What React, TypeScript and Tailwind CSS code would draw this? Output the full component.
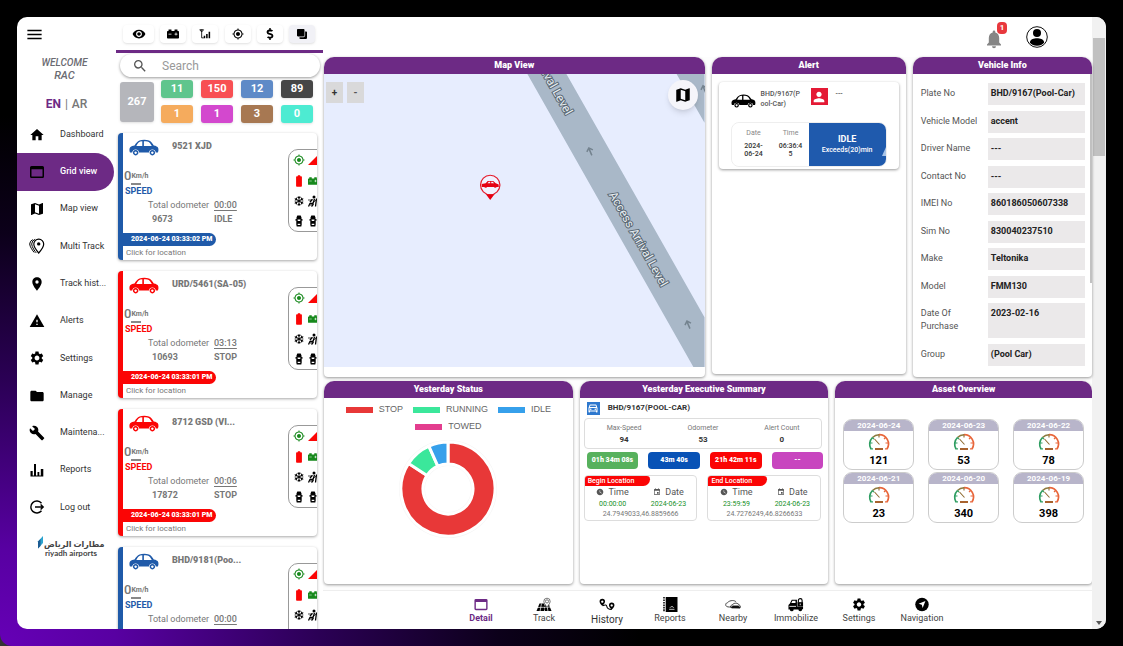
import React from "react";
import {
  MdRemoveRedEye, MdMyLocation, MdHome, MdMap, MdLocationOn, MdWarning, MdSettings,
  MdFolder, MdBuild, MdSearch, MdMenu, MdSignalCellular4Bar, MdBatteryFull,
  MdPerson, MdEvent, MdWatchLater, MdOutlineDirectionsCar,
} from "react-icons/md";
import { FaCarBattery, FaDollarSign, FaClone, FaRegSnowflake } from "react-icons/fa";

type P = { className?: string };

const Sedan = ({ className }: P) => (
  <svg viewBox="0 0 30 17" className={className} fill="currentColor" aria-hidden="true">
    <path fillRule="evenodd" d="M1 13.5C.2 12 .2 9.500 1.200 8.300C2.500 7 4 6.800 5.500 6.400C7 4 8.500 2.200 10.500 1.400C13 .5 17.500 .5 20 1.400C22 2.200 23.500 4.500 24.800 6.400C27 6.800 28.700 7.500 29.200 9C29.600 10.500 29.600 12.500 28.800 13.500H26.800A3.500 3.500 0 0 0 19.900 13.500H10.100A3.500 3.500 0 0 0 3.200 13.500ZM7.300 7H13.300V2.200C10 2.200 8.800 4 7.300 7ZM14.900 7H22.800C21.700 4.600 20.300 2.700 18.400 2.400C17.200 2.200 16.200 2.200 14.900 2.200Z" />
    <path fillRule="evenodd" d="M6.650 11a2.700 2.700 0 1 0 .01 0zM6.650 12.500a1.200 1.200 0 1 1-.01 0zM23.350 11a2.700 2.700 0 1 0 .01 0zM23.350 12.500a1.200 1.200 0 1 1-.01 0z" />
  </svg>
);

const WindowIcon = ({ className }: P) => (
  <svg viewBox="0 0 16 16" className={className} fill="currentColor" aria-hidden="true">
    <path fillRule="evenodd" d="M2.500 2H13.500A1.500 1.500 0 0 1 15 3.500V12.500A1.500 1.500 0 0 1 13.500 14H2.500A1.500 1.500 0 0 1 1 12.500V3.500A1.500 1.500 0 0 1 2.500 2ZM2.500 5.200V12.500H13.500V5.200Z" />
  </svg>
);

const Bell = ({ className }: P) => (
  <svg viewBox="0 0 16 20" className={className} fill="currentColor" aria-hidden="true">
    <path d="M8 1.500A1.300 1.300 0 0 0 6.700 2.800V3.500C4 4.200 2.800 6.500 2.800 9V13.500L1 15.500V16.500H15V15.500L13.200 13.500V9C13.200 6.500 12 4.200 9.300 3.500V2.800A1.300 1.300 0 0 0 8 1.500ZM6 17.300A2 2 0 0 0 10 17.300Z" />
  </svg>
);

const Antenna = ({ className }: P) => (
  <svg viewBox="0 0 14 12" className={className} aria-hidden="true">
    <path d="M.8 1H5.400M3.100 1V10.500H5.500M1 1.200L3.100 3.600L5.200 1.200" fill="none" stroke="currentColor" strokeWidth="1" />
    <path d="M5.500 8H7.300V11H5.500zM8.300 6H10.100V11H8.300zM11.200 3.500H13V11H11.200z" fill="currentColor" />
  </svg>
);

const MultiPin = ({ className }: P) => (
  <svg viewBox="0 0 16 16" className={className} fill="none" stroke="currentColor" strokeWidth="1.200" aria-hidden="true">
    <path d="M9.700 1.200A4.900 4.900 0 0 0 4.800 6.100C4.800 9.500 9.700 15 9.700 15S14.700 9.500 14.700 6.100A4.900 4.900 0 0 0 9.700 1.200Z" />
    <circle cx="9.700" cy="5.900" r="1.700" fill="currentColor" stroke="none" />
    <path d="M6.200 1.300A5 5 0 0 0 2.700 6C2.700 9 6.300 13.800 7.200 14.900M3.800 1.600A5 5 0 0 0 .7 6C.7 8.700 4 13 5.200 14.500" strokeWidth="1" />
  </svg>
);

const Bars = ({ className }: P) => (
  <svg viewBox="0 0 16 16" className={className} fill="currentColor" aria-hidden="true">
    <path d="M1.500 9H3.700V14H1.500zM5 2H7V14H5zM8.500 10H10.300V14H8.500zM11.800 7H14.300V14H11.800zM1.500 13.500H14.300V14.500H1.500z" />
  </svg>
);

const LogOut = ({ className }: P) => (
  <svg viewBox="0 0 16 16" className={className} fill="none" stroke="currentColor" strokeWidth="1.400" aria-hidden="true">
    <path d="M12.500 4.200A6 6 0 1 0 12.500 11.800M6 8H14M11.600 5.500L14.200 8L11.600 10.500" />
  </svg>
);

const TopCar = ({ className }: P) => (
  <svg viewBox="0 0 8 12" className={className} fill="currentColor" aria-hidden="true">
    <path fillRule="evenodd" d="M2.300 .5H5.700L6.500 2.500V4L7.700 4.500V5.500H6.700V9.500L6.300 11.500H1.700L1.300 9.500V5.500H.3V4.500L1.500 4V2.500ZM2.500 4.500L2.800 6H5.200L5.500 4.500ZM2.700 8.800V10H5.300V8.800Z" />
  </svg>
);

const SeatBelt = ({ className }: P) => (
  <svg viewBox="0 0 12 12" className={className} fill="none" stroke="currentColor" aria-hidden="true">
    <circle cx="7" cy="2" r="1.500" fill="currentColor" stroke="none" />
    <path d="M7.500 4L6 8.500H3L1.500 11.500M5.500 4.200L3 7M9.500 3.500L8.500 11.500M4.500 11.500L6.500 9" strokeWidth="1.300" />
    <path d="M9 5L3 10.500M1 5L5 5" strokeWidth=".7" />
  </svg>
);

const Avatar = ({ className }: P) => (
  <svg viewBox="0 0 22 22" className={className} aria-hidden="true">
    <circle cx="11" cy="11" r="10.300" fill="none" stroke="#111" strokeWidth="1" />
    <circle cx="11" cy="7" r="4" />
    <path d="M3.800 16.500C4.500 13 8 12.300 11 12.300S17.500 13 18.200 16.500C16.500 18.700 14 19.800 11 19.800S5.500 18.700 3.800 16.500Z" />
  </svg>
);

const TrackIcon = ({ className }: P) => (
  <svg viewBox="0 0 16 14" className={className} aria-hidden="true">
    <path d="M3.500 6H12.500L15.500 13.500H.5Z" />
    <path d="M1 10L15 9.500M5.500 6L4 14M8.500 6V8M8.500 9.500V11M8.500 12V14M11 8L12 14" stroke="#fff" strokeWidth=".7" fill="none" />
    <path d="M11 .7A3.200 3.200 0 0 0 7.800 4C7.800 6 11 9.500 11 9.500S14.200 6 14.200 4A3.200 3.200 0 0 0 11 .7Z" fill="#fff" stroke="#555" strokeWidth=".8" />
    <circle cx="11" cy="3.900" r="1.600" fill="none" stroke="#555" strokeWidth=".8" />
  </svg>
);

const HistoryIcon = ({ className }: P) => (
  <svg viewBox="0 0 17 12" className={className} aria-hidden="true">
    <path fillRule="evenodd" d="M3.500 0A2.900 2.900 0 0 0 .6 2.900C.6 4.800 3.500 7.600 3.500 7.600S6.400 4.800 6.400 2.900A2.900 2.900 0 0 0 3.500 0ZM3.500 1.700a1.200 1.200 0 1 1-.01 0zM13.500 4A2.900 2.900 0 0 0 10.600 6.900C10.600 8.800 13.500 11.600 13.500 11.600S16.400 8.800 16.400 6.900A2.900 2.900 0 0 0 13.500 4ZM13.500 5.700a1.200 1.200 0 1 1-.01 0z" />
    <path d="M3.800 7.300C7 6 8 6.300 8.300 8S9.500 11.300 13.500 11.200" fill="none" stroke="#000" strokeWidth="1.100" />
  </svg>
);

const BookIcon = ({ className }: P) => (
  <svg viewBox="0 0 14 14" className={className} aria-hidden="true">
    <path d="M3 0H14V14H3z" />
    <path d="M1.400 0V14" stroke="#000" strokeWidth="1.400" strokeDasharray="1.500 .8" />
    <path d="M6.200 11.500H11.200M7 10A2 2 0 0 1 10.500 10" stroke="#fff" strokeWidth=".7" fill="none" />
  </svg>
);

const NearbyIcon = ({ className }: P) => (
  <svg viewBox="0 0 17 10" className={className} fill="none" stroke="#111" strokeWidth=".8" aria-hidden="true">
    <path d="M7 7.500C4 8 1.500 7.500 1 6.300C.4 4.500 1 3.500 2.500 3.200C4 1.500 6 .8 8 .8C9.500 .8 10.700 1.200 11.800 2.200" />
    <path d="M6 8C5.500 6.500 6.500 5.800 7.500 5.600C9 4 10 3.600 11.500 3.600S14.500 4.300 15.200 5.700C16.500 6 16.700 7.500 16 8.500Z" />
    <path d="M8 6.500H14.500L16 8.700H7Z" fill="#111" />
  </svg>
);

const ImmobilizeIcon = ({ className }: P) => (
  <svg viewBox="0 0 17 14" className={className} aria-hidden="true">
    <path fillRule="evenodd" d="M2 6L4 2H9.500V9H16V12H15A2 2 0 0 1 11 12.300H6A2 2 0 0 1 2 12.300H.5V7.500ZM3.500 5.500H8V3H4.700Z" />
    <path d="M10 4.500H16V9H10z" />
    <path d="M11 5V2.700A2 2 0 0 1 15 2.700V5" fill="none" stroke="#000" strokeWidth="1.200" />
    <path d="M13 6V7.700M1.500 9H8.500" stroke="#fff" strokeWidth=".9" />
  </svg>
);

const NavIcon = ({ className }: P) => (
  <svg viewBox="0 0 14 14" className={className} aria-hidden="true">
    <circle cx="7" cy="7" r="6.300" />
    <path d="M10.200 3.800L7.600 10.200L6.800 7.200L3.800 6.400Z" fill="#fff" />
  </svg>
);

const Gauge = ({ className }: P) => (
  <svg viewBox="0 0 22 18" className={className} fill="none" aria-hidden="true">
    <path d="M3 15.500A9.300 9.300 0 0 1 4.500 4" stroke="#2f9e62" strokeWidth="1.700" />
    <path d="M4.500 4A9.300 9.300 0 0 1 11 1.200" stroke="#8d7a3e" strokeWidth="1.500" />
    <path d="M11 1.200A9.300 9.300 0 0 1 19 15.500" stroke="#e8673c" strokeWidth="1.700" />
    <path d="M1.800 9.500H4.500M4.300 4L6 5.700M2.500 15.300H5" stroke="#2f9e62" strokeWidth="1.200" />
    <path d="M11 1V4M6.500 5.500L11.500 11" stroke="#8d6a2e" strokeWidth="1.100" />
    <path d="M17.500 4L16 5.700M20.200 9.500H17.500M17 15.300H19.500" stroke="#e8673c" strokeWidth="1.200" />
    <path d="M7 15.500H15" stroke="#a8622e" strokeWidth="2" />
  </svg>
);

const navItems = [
  { label: "Dashboard", Icon: MdHome }, { label: "Grid view", Icon: WindowIcon },
  { label: "Map view", Icon: MdMap }, { label: "Multi Track", Icon: MultiPin },
  { label: "Track hist...", Icon: MdLocationOn }, { label: "Alerts", Icon: MdWarning },
  { label: "Settings", Icon: MdSettings }, { label: "Manage", Icon: MdFolder },
  { label: "Maintena...", Icon: MdBuild }, { label: "Reports", Icon: Bars },
  { label: "Log out", Icon: LogOut },
];

function Sidebar() {
  return (
    <aside className="flex w-[99px] shrink-0 flex-col">
      <button aria-label="Menu" className="ml-2 mt-2 w-5"><MdMenu className="size-[19px]" /></button>
      <p className="mt-3 pr-1 text-center text-[10px] font-medium italic leading-[13px] text-[#6b6b72]">WELCOME<br /><span className="text-[11px]">RAC</span></p>
      <div className="mt-3.5 flex justify-center gap-1 text-xs font-medium leading-4 text-[#777]">
        <button className="font-bold text-[#6d2a85]">EN</button><span className="font-normal">|</span><button>AR</button>
      </div>
      <nav className="mt-1 grid h-[410px] auto-rows-fr">
        {navItems.map(({ label, Icon }) => (
          <a key={label} href="#" className={label === "Grid view"
            ? "mr-0.5 flex items-center rounded-r-full bg-[#6d2a85] pl-3 text-[9px] font-medium text-white"
            : "flex items-center pl-3 text-[9px] text-[#333]"}>
            <Icon className="size-4 shrink-0 text-black" />
            <span className="ml-[15px] whitespace-nowrap">{label}</span>
          </a>
        ))}
      </nav>
      <div className="mt-2.5 flex pl-5">
        <svg viewBox="0 0 7 13" className="h-[13px] w-[7px] shrink-0" aria-hidden="true">
          <path d="M6 0V7L1 12.500V5.500Z" fill="#2da4cf" /><path d="M1 5.500L3.500 3V10L1 12.500Z" fill="#1c5b92" />
        </svg>
        <p className="mt-1 w-[53px] whitespace-nowrap text-right font-['Lato','DejaVu_Sans',sans-serif] text-[8px] font-bold leading-[9px] text-[#444]">
          <span lang="ar" dir="rtl">مطارات الرياض</span><br />riyadh airports
        </p>
      </div>
    </aside>
  );
}

const tools = [
  { label: "Visibility", Icon: MdRemoveRedEye }, { label: "Battery", Icon: FaCarBattery },
  { label: "Signal", Icon: Antenna }, { label: "Locate", Icon: MdMyLocation },
  { label: "Cost", Icon: FaDollarSign }, { label: "Layers", Icon: FaClone },
];

const counts = [
  ["11", "bg-[#5fc58d]"], ["150", "bg-[#f84f53]"], ["12", "bg-[#5e8ac7]"], ["89", "bg-[#464646]"],
  ["1", "bg-[#f5ab5d]"], ["1", "bg-[#d348ce]"], ["3", "bg-[#a77852]"], ["0", "bg-[#4debd2]"],
];

const vehicles = [
  { plate: "9521 XJD", odo: "9673", dur: "00:00", state: "IDLE", at: "2024-06-24 03:33:02 PM" },
  { plate: "URD/5461(SA-05)", odo: "10693", dur: "03:13", state: "STOP", at: "2024-06-24 03:33:01 PM" },
  { plate: "8712 GSD (VI...", odo: "17872", dur: "00:06", state: "STOP", at: "2024-06-24 03:33:01 PM" },
  { plate: "BHD/9181(Poo...", odo: "9167", dur: "00:00", state: "IDLE", at: "2024-06-24 03:33:02 PM" },
];

function VehicleCard({ v }: { v: (typeof vehicles)[number] }) {
  const idle = v.state === "IDLE";
  return (
    <article className={idle
      ? "flex h-[127px] shrink-0 overflow-hidden rounded border-l-[5px] border-[#1f5aa9] bg-white text-[#777] shadow-[0_1px_3px_rgba(0,0,0,0.35)]"
      : "flex h-[127px] shrink-0 overflow-hidden rounded border-l-[5px] border-[#fb0505] bg-white text-[#777] shadow-[0_1px_3px_rgba(0,0,0,0.35)]"}>
      <div className="w-[165px] shrink-0">
        <div className="flex h-[22px] items-center gap-[13px] pl-1.5 pt-1.5">
          <Sedan className={idle ? "h-[17px] w-[30px] text-[#1f5aa9]" : "h-[17px] w-[30px] text-[#fb0505]"} />
          <h3 className="whitespace-nowrap text-[9px] font-black">{v.plate}</h3>
        </div>
        <p className="mt-3.5 pl-px text-[13px] font-medium leading-[14px]">0<span className="align-[2px] text-[7px] font-bold">Km/h</span></p>
        <div className="ml-2 h-0.5 w-2.5 bg-[#888]" />
        <p className={idle ? "pl-0.5 text-[9px] font-bold leading-[13px] text-[#1f5aa9]" : "pl-0.5 text-[9px] font-bold leading-[13px] text-[#fb0505]"}>SPEED</p>
        <dl className="grid grid-cols-[1fr_74px] pl-[25px] text-[9px] leading-[14px]">
          <dt className="whitespace-nowrap">Total odometer</dt><dd className="font-medium underline underline-offset-2">{v.dur}</dd>
          <dd className="pl-1 font-bold">{v.odo}</dd><dd className="font-bold">{v.state}</dd>
        </dl>
        <p className={idle
          ? "mt-[7px] w-[93px] rounded-r-full bg-[#1f5aa9] pl-2 text-[7px] font-black leading-[13px] text-white"
          : "mt-[7px] w-[93px] rounded-r-full bg-[#fb0505] pl-2 text-[7px] font-black leading-[13px] text-white"}>{v.at}</p>
        <a href="#" className="block pl-[3px] text-[8px] leading-[13px]">Click for location</a>
      </div>
      <div className="mt-4 grid h-[83px] w-[50px] shrink-0 grid-cols-[14px_14px] content-around items-center justify-items-center rounded-[10px] border border-[#999] pl-[3px] text-black">
        <MdMyLocation className="size-3 text-[#16881b]" /><MdSignalCellular4Bar className="size-3 text-[#fb0505]" />
        <MdBatteryFull className="size-3.5 text-[#fb0505]" /><FaCarBattery className="size-2.5 text-[#16881b]" />
        <FaRegSnowflake className="size-2.5" /><SeatBelt className="size-3" />
        <TopCar className="h-3 w-2" /><TopCar className="h-3 w-2" />
      </div>
    </article>
  );
}

function VehicleColumn() {
  return (
    <section className="flex w-[207px] shrink-0 flex-col">
      <div className="flex h-[36px] shrink-0 items-center justify-between border-b-[3px] border-[#6d2a85] pl-[7px] pr-2">
        {tools.map(({ label, Icon }) => (
          <button key={label} aria-label={label} className={label === "Layers"
            ? "flex h-[18px] w-[26px] items-center justify-center rounded-sm bg-[#f1f1f6] shadow"
            : label === "Visibility"
              ? "flex h-[18px] w-[31px] items-center justify-center rounded-sm bg-white shadow"
              : "flex h-[18px] w-[26px] items-center justify-center rounded-sm bg-white shadow"}>
            <Icon className={label === "Visibility" ? "size-3.5" : label === "Layers" ? "size-2.5 -scale-x-100" : "size-3"} />
          </button>
        ))}
      </div>
      <label className="ml-1 mr-[3px] mt-px flex h-[23px] shrink-0 items-center rounded-full bg-white pl-3 shadow-[0_1px_3px_rgba(0,0,0,0.4)]">
        <MdSearch className="size-4 shrink-0 text-[#555]" />
        <input aria-label="Search" placeholder="Search" className="ml-3.5 w-full min-w-0 bg-transparent text-xs outline-none placeholder:text-[#999]" />
      </label>
      <div className="ml-1 mt-[3px] flex gap-[7px] text-[11px] font-bold text-white">
        <button className="mb-px mt-0.5 w-[34px] rounded-[3px] bg-[#b5b6bb] shadow-sm">267</button>
        <div className="grid grid-cols-[32px_32px_32px_32px] gap-x-2 gap-y-[7px]">
          {counts.map(([n, c], i) => <button key={i} className={`h-[18px] rounded-[3px] shadow-sm ${c}`}>{n}</button>)}
        </div>
      </div>
      <div className="mt-[7px] flex min-h-0 flex-1 flex-col gap-[11px] overflow-y-auto pl-0.5 pr-[6px] pt-[3px] [scrollbar-width:none]">
        {vehicles.map((v) => <VehicleCard key={v.plate} v={v} />)}
      </div>
    </section>
  );
}

function Panel({ title, className = "", children }: { title: string; className?: string; children: React.ReactNode }) {
  return (
    <section className={`flex min-w-0 flex-col overflow-hidden rounded-b rounded-t-[10px] bg-white shadow-[0_1px_3px_rgba(0,0,0,0.4)] ${className}`}>
      <h2 className="shrink-0 bg-[#6d2a85] text-center text-[9px] font-black leading-[17px] text-white">{title}</h2>
      {children}
    </section>
  );
}

const Arrow = ({ x, y }: { x: number; y: number }) => (
  <path d="M-3.500 0L-1.500 -4L2.500 -2M-1.500 -3.500L1.500 3.500" transform={`translate(${x} ${y})`} fill="none" stroke="#74838f" strokeWidth="1.500" />
);

function MapPanel() {
  return (
    <Panel title="Map View" className="relative h-[320px]">
      <svg viewBox="0 0 380 293" preserveAspectRatio="xMidYMid slice" className="h-[293px] w-full bg-[#e7edfe]" role="img" aria-label="Map">
        <path d="M203 0H242L380 243V293H369ZM352 0H380V49Z" fill="#a9b8c8" />
        <g className="font-['Roboto',sans-serif]" fontSize="12" fill="#e6ecf0" stroke="#596773" strokeWidth="2" paintOrder="stroke" dominantBaseline="central">
          <text transform="translate(314 165) rotate(60.500)" textAnchor="middle">Access Arrival Level</text>
          <text transform="translate(245 40) rotate(60.500)" textAnchor="end">Access Arrival Level</text>
        </g>
        <Arrow x={266} y={78} /><Arrow x={364} y={251} /><Arrow x={380} y={16} />
        <circle cx="166" cy="111" r="9.700" fill="#f1f1ff" stroke="#e41b2b" strokeWidth="1.200" />
        <path d="M161.500 120Q166 122 170.500 120L166 126Z" fill="#e60012" />
        <path fillRule="evenodd" d="M157.500 113V110L161.500 109.300L163.500 107H169L171.500 109.300L174.500 110.500V113H172.500A1.800 1.800 0 0 1 169.500 113H163A1.800 1.800 0 0 1 160 113ZM163.300 109.400H166V107.900H164.500ZM167 109.400H170L168.500 107.900H167Z" fill="#e60012" />
      </svg>
      <div className="absolute left-[2px] top-[25px] flex gap-1">
        <button aria-label="Zoom in" className="h-[21px] w-[17px] bg-[#d9d9da] text-[10px] font-bold leading-none text-[#333]">+</button>
        <button aria-label="Zoom out" className="h-[21px] w-[17px] bg-[#d9d9da] text-[10px] font-bold leading-none text-[#555]">-</button>
      </div>
      <button aria-label="Map layers" className="absolute right-[7px] top-[23px] flex size-[30px] items-center justify-center rounded-full bg-[#f5f5fa] shadow-md">
        <MdMap className="size-[18px]" />
      </button>
    </Panel>
  );
}

function AlertPanel() {
  return (
    <Panel title="Alert" className="h-[317px]">
      <div className="mx-[7px] mt-2 h-[87px] rounded bg-white px-3 pt-[5px] shadow-[0_1px_3px_rgba(0,0,0,0.4)]">
        <div className="flex h-[27px] text-[7px] font-medium leading-[10px] text-[#555]">
          <Sedan className="mt-[7px] h-3.5 w-[25px] shrink-0 text-black" />
          <p className="ml-[5px] mt-0.5 w-[42px] shrink-0">BHD/9167(P<br />ool-Car)</p>
          <span className="ml-2 mt-px flex size-[17px] shrink-0 items-center justify-center bg-[#e41a35]"><MdPerson className="size-4 text-white" /></span>
          <span className="ml-2 mt-0.5">---</span>
        </div>
        <div className="mt-2 flex h-[45px] overflow-hidden rounded-lg border border-[#eee] text-center">
          <div className="flex w-[81px] shrink-0 justify-between rounded-lg bg-white px-2 pt-1">
            <p className="w-[28px] text-[7px] leading-[12px] text-[#888]">Date<span className="mt-[3px] block font-medium leading-[8px] text-[#333]">2024-<br />06-24</span></p>
            <p className="w-[28px] text-[7px] leading-[12px] text-[#888]">Time<span className="mt-[3px] block font-medium leading-[8px] text-[#333]">06:36:4<br />5</span></p>
          </div>
          <div className="relative -ml-1 flex-1 bg-[#1f5aad] pt-2.5 text-white">
            <p className="text-[9px] font-bold leading-[12px]">IDLE</p>
            <p className="text-[7px] font-medium leading-[11px]">Exceeds(20)min</p>
            <svg viewBox="0 0 4 9" className="absolute bottom-2.5 right-0 h-[9px] w-1" aria-hidden="true"><path d="M4 0V9H0Z" fill="#a8c4e8" /></svg>
          </div>
        </div>
      </div>
    </Panel>
  );
}

const info = [
  ["Plate No", "BHD/9167(Pool-Car)"], ["Vehicle Model", "accent"], ["Driver Name", "---"], ["Contact No", "---"],
  ["IMEI No", "860186050607338"], ["Sim No", "830040237510"], ["Make", "Teltonika"], ["Model", "FMM130"],
  ["Date Of Purchase", "2023-02-16"], ["Group", "(Pool Car)"],
];

function InfoPanel() {
  return (
    <Panel title="Vehicle Info" className="relative h-[320px]">
      <dl className="flex flex-1 flex-col justify-between pb-[11px] pl-2 pr-[7px] pt-[9px] text-[9px] leading-[13px]">
        {info.map(([k, v]) => (
          <div key={k} className={k === "Date Of Purchase" ? "flex h-[35px]" : "flex h-[22px]"}>
            <dt className="w-[67px] shrink-0 pr-2 pt-1 text-[#555]"><span className={k === "Date Of Purchase" ? "" : "whitespace-nowrap"}>{k}</span></dt>
            <dd className="flex-1 whitespace-nowrap bg-[#ebe9ea] pl-[3px] pt-1 font-bold text-[#222]">{v}</dd>
          </div>
        ))}
      </dl>
      <div className="absolute right-0 top-[17px] h-[209px] w-0.5 bg-[#c1c1c1]" />
    </Panel>
  );
}

const legend = [["STOP", "bg-[#e83838]"], ["RUNNING", "bg-[#3be79b]"], ["IDLE", "bg-[#36a0eb]"], ["TOWED", "bg-[#e33d8e]"]];

function arc(a: number, b: number) {
  const pt = (r: number, d: number) => `${50 + r * Math.sin((d * Math.PI) / 180)} ${50 - r * Math.cos((d * Math.PI) / 180)}`;
  const big = b - a > 180 ? 1 : 0;
  return `M${pt(47, a)}A47 47 0 ${big} 1 ${pt(47, b)}L${pt(25, b)}A25 25 0 ${big} 0 ${pt(25, a)}Z`;
}

function StatusPanel() {
  return (
    <Panel title="Yesterday Status">
      <ul className="mt-[3px] flex flex-wrap justify-center gap-x-2.5 px-4 font-['Liberation_Sans',Arial,sans-serif] text-[9px] leading-[17px] text-[#666]">
        {legend.map(([n, c]) => <li key={n} className="flex items-center gap-1.5"><span className={`h-1.5 w-[27px] ${c}`} />{n}</li>)}
      </ul>
      <svg viewBox="0 0 100 100" className="mx-auto mt-1 size-[100px]" role="img" aria-label="Status chart">
        <circle cx="50" cy="50" r="36" fill="none" stroke="#f6f6f6" strokeWidth="26" />
        <g stroke="#fff" strokeWidth="3">
          <path d={arc(0, 303)} fill="#e83838" />
          <path d={arc(303, 336)} fill="#3be79b" />
          <path d={arc(336, 360)} fill="#36a0eb" />
        </g>
      </svg>
    </Panel>
  );
}

function Place({ title, time, coords }: { title: string; time: string; coords: string }) {
  return (
    <div className="h-[46px] overflow-hidden rounded border border-[#ddd] text-center">
      <p className={title === "End Location"
        ? "w-[59px] rounded-br-lg rounded-tr bg-[#fb0505] pl-[3px] text-left text-[7px] font-medium leading-[10px] text-white"
        : "w-[65px] rounded-br-lg rounded-tr bg-[#fb0505] pl-[3px] text-left text-[7px] font-medium leading-[10px] text-white"}>{title}</p>
      <div className="grid grid-cols-2 leading-[12px]">
        <p className="flex items-center justify-center gap-1 text-[9px] text-[#555]"><MdWatchLater className="size-2" />Time</p>
        <p className="flex items-center justify-center gap-1 text-[9px] text-[#555]"><MdEvent className="size-2" />Date</p>
        <p className="text-[7px] text-[#16901f]">{time}</p>
        <p className="text-[7px] text-[#16901f]">2024-06-23</p>
      </div>
      <p className="text-[7px] leading-[9px] text-[#777]">{coords}</p>
    </div>
  );
}

function SummaryPanel() {
  const chips = [["01h 34m 08s", "bg-[#57b15d]"], ["43m 40s", "bg-[#0852b6]"], ["21h 42m 11s", "bg-[#fb0505]"], ["--", "bg-[#c845bf]"]];
  return (
    <Panel title="Yesterday Executive Summary">
      <div className="flex h-[20px] shrink-0 items-center gap-2 pl-[7px]">
        <span className="flex size-[13px] items-center justify-center bg-[#2e78ce]"><MdOutlineDirectionsCar className="size-3 text-white" /></span>
        <h3 className="text-[8px] font-bold text-[#333]">BHD/9167(POOL-CAR)</h3>
      </div>
      <dl className="ml-1 mr-1.5 grid h-[31px] shrink-0 grid-cols-3 rounded border border-[#ddd] pt-1 text-center leading-[11px]">
        {[["Max-Speed", "94"], ["Odometer", "53"], ["Alert Count", "0"]].map(([k, v]) => (
          <div key={k}><dt className="text-[7px] text-[#777]">{k}</dt><dd className="text-[8px] font-bold text-[#333]">{v}</dd></div>
        ))}
      </dl>
      <div className="ml-[7px] mr-[5px] mt-[3px] grid grid-cols-4 gap-2.5 text-center text-[7px] font-black leading-[17px] text-white">
        {chips.map(([t, c]) => <span key={t} className={`rounded-sm ${c}`}>{t}</span>)}
      </div>
      <div className="ml-1 mr-[7px] mt-1.5 grid grid-cols-2 gap-2.5">
        <Place title="Begin Location" time="00:00:00" coords="24.7949033,46.8859666" />
        <Place title="End Location" time="23:59:59" coords="24.7276249,46.8266633" />
      </div>
    </Panel>
  );
}

const assets = [["2024-06-24", "121"], ["2024-06-23", "53"], ["2024-06-22", "78"], ["2024-06-21", "23"], ["2024-06-20", "340"], ["2024-06-19", "398"]];

function AssetPanel() {
  return (
    <Panel title="Asset Overview">
      <div className="mt-[21px] grid grid-cols-3 gap-x-3.5 gap-y-0.5 px-2 text-center">
        {assets.map(([d, n]) => (
          <div key={d} className="h-[51px] overflow-hidden rounded-[9px] border border-[#ccc] bg-white">
            <p className="bg-[#b8b5ca] text-[8px] font-bold leading-[11px] text-white">{d}</p>
            <Gauge className="mx-auto mt-0.5 h-[19px] w-[22px]" />
            <p className="mt-0.5 text-[11px] font-bold leading-[14px]">{n}</p>
          </div>
        ))}
      </div>
    </Panel>
  );
}

const tabs = [
  { label: "Detail", Icon: WindowIcon }, { label: "Track", Icon: TrackIcon }, { label: "History", Icon: HistoryIcon },
  { label: "Reports", Icon: BookIcon }, { label: "Nearby", Icon: NearbyIcon }, { label: "Immobilize", Icon: ImmobilizeIcon },
  { label: "Settings", Icon: MdSettings }, { label: "Navigation", Icon: NavIcon },
];

export default function App() {
  return (
    <div className="h-screen overflow-hidden bg-[#333] font-['Roboto',sans-serif]">
      <div className="h-full rounded-bl-xl bg-black bg-[radial-gradient(ellipse_640px_530px_at_0%_100%,#6600b6_0%,#5800a2_18%,#2b0055_50%,#0c001a_78%,#000_100%)] p-[17px]">
        <div className="flex h-full overflow-hidden rounded-[10px] bg-white">
          <Sidebar />
          <VehicleColumn />
          <main className="flex min-w-0 flex-1 flex-col bg-[#fdfdfd]">
            <header className="flex h-10 shrink-0 items-center justify-end gap-6 bg-white pr-11">
              <button aria-label="Notifications" className="relative text-[#858585]">
                <Bell className="mt-1 h-5 w-4" />
                <span className="absolute -right-[5px] -top-[3px] h-3 w-2.5 rounded-sm bg-[#e8383d] text-center text-[8px] font-bold leading-3 text-white">1</span>
              </button>
              <button aria-label="Account"><Avatar className="size-[22px]" /></button>
            </header>
            <div className="grid shrink-0 grid-cols-[380fr_194fr_179fr] items-start gap-[7px] pl-px">
              <MapPanel /><AlertPanel /><InfoPanel />
            </div>
            <div className="mt-1 grid h-[203px] shrink-0 grid-cols-[249fr_249fr_257fr] gap-[7px] pl-px">
              <StatusPanel /><SummaryPanel /><AssetPanel />
            </div>
            <nav className="mt-1.5 flex flex-1 justify-center border-t border-[#eee] bg-white pr-3 pt-1.5">
              {tabs.map(({ label, Icon }) => (
                <a key={label} href="#" className={label === "Detail"
                  ? "flex w-[63px] flex-col items-center text-[9px] font-bold leading-[13px] text-[#6d2a85]"
                  : label === "History"
                    ? "flex w-[63px] flex-col items-center text-[10px] leading-[15px] text-[#333]"
                    : "flex w-[63px] flex-col items-center text-[9px] leading-[13px] text-[#444]"}>
                  <Icon className={label === "Detail" ? "h-[15px] w-4" : "h-[15px] w-4 text-black"} />
                  {label}
                </a>
              ))}
            </nav>
          </main>
          <div className="flex w-3.5 shrink-0 flex-col items-center justify-between bg-[#f1f1f1] pb-1" aria-hidden="true">
            <div className="mt-[21px] h-[118px] w-3 bg-[#c1c1c1]" />
            <svg viewBox="0 0 6 4" className="h-1 w-1.5"><path d="M0 0H6L3 4Z" fill="#555" /></svg>
          </div>
        </div>
      </div>
    </div>
  );
}
